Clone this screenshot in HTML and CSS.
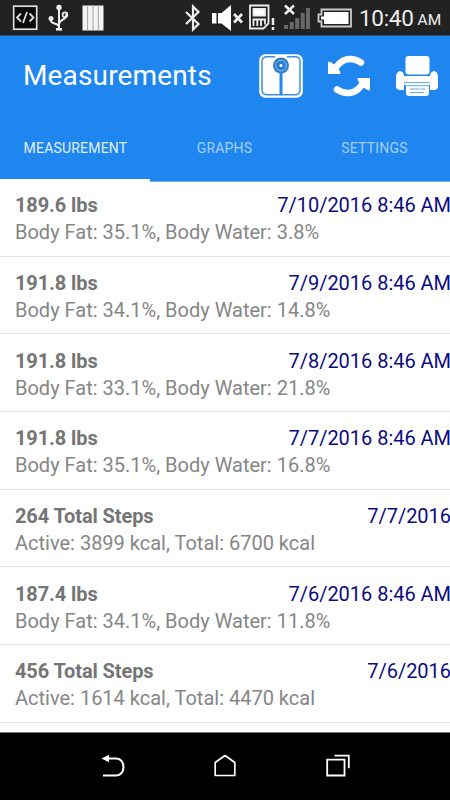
FILE: index.html
```
<!DOCTYPE html>
<html lang="en">
<head>
<meta charset="utf-8">
<title>Measurements</title>
<link rel="stylesheet" href="styles.css">
</head>
<body>
<div class="phone">
  <div class="status">
    <svg class="i-code" width="26" height="26" viewBox="0 0 26 26" fill="none" stroke="#ddd"><rect x="1.7" y="1.2" width="23" height="23" fill="#090909" stroke-width="1.7"/><path d="M9 8.500l-4 4 4 4M17.500 8.500l4 4-4 4M15 7l-4 11" stroke-width="1.800"/></svg>
    <svg class="i-usb" width="22" height="28" viewBox="0 0 22 28" fill="none" stroke="#eee" stroke-width="2"><path d="M11 3v21M3 15v2c0 3 8 2 8 6M18 10c2 6-7 5-7 10" /><circle cx="11" cy="3.4" r="2.7" fill="#eee" stroke="none"/><circle cx="3" cy="14.5" r="2.5" fill="#eee" stroke="none"/><circle cx="17" cy="10.7" r="2.4" stroke-width="1.7"/><path d="M8 25.3h6" stroke-width="2.6"/></svg>
    <svg class="i-bars" width="22" height="26" viewBox="0 0 22 26"><path fill="#f4f4f4" d="M.5.5h21v25H.5z"/><path d="M5.6 0v26M11 0v26M16.3 0v26" stroke="#a0a0a0" stroke-width="1"/></svg>
    <svg class="i-bt" width="16" height="28" viewBox="0 0 16 28" fill="none" stroke="#eee" stroke-width="2.200"><path d="M1 8l12.500 12L8 25.500v-23L13.500 8 1 20"/></svg>
    <svg class="i-mute" width="33" height="28" viewBox="0 0 33 28"><path fill="#fff" d="M0 9h4.500v10.500H0zM6 9h3.500L19 1v26l-9.500-7.500H6z"/><path d="M22 10l8 8.500M30 10l-8 8.500" stroke="#eee" stroke-width="2.700"/></svg>
    <svg class="i-sim" width="26" height="27" viewBox="0 0 26 27" fill="none" stroke="#eee" stroke-width="1.800"><path d="M1 1.500h18.500v18l-5 5H1z"/><path d="M4.500 5h11.500v6.500H4.500z" fill="#fff"/><path d="M4.500 22v-6.500h11.500v5M8.300 16v6M12 16v6"/><path d="M24 14v7M24 23v3" stroke-width="2.500"/></svg>
    <svg class="i-signal" width="28" height="28" viewBox="0 0 28 28"><path fill="#686868" d="M1 23h4v4H1zM6.700 20h4v7h-4zM12.200 16h4v11h-4zM17.700 11h4v16h-4zM23 6h4v21h-4z"/><path d="M2 3.500l9 8.500M11 3.500l-9 8.500" stroke="#eee" stroke-width="2.500"/></svg>
    <svg class="i-batt" width="36" height="20" viewBox="0 0 36 20"><path d="M1.500 6.500h3v-5h29.500v17H4.500v-5h-3z" fill="#222" stroke="#c7cdc4" stroke-width="1.800"/><path d="M4 8.500h3V4h24.500v12H7v-4.500H4z" fill="#fff"/></svg>
    <span class="clock">10:40</span><span class="ampm">AM</span>
  </div>
  <header>
    <div class="bar">
      <h1>Measurements</h1>
      <svg class="i-scale" width="44" height="44" viewBox="0 0 44 44"><rect x=".2" y=".2" width="43.600" height="43.600" rx="6" fill="#fff"/><path d="M16 2.800H8q-5 0-5 5v28q0 5 5 5h28q5 0 5-5v-28q0-5-5-5h-8" fill="none" stroke="#3e90e4" stroke-width="1.500"/><path d="M22 17v24" stroke="#1e88f0" stroke-width="3"/><circle cx="22" cy="11.500" r="8" fill="#2e7fd0"/><circle cx="22" cy="11.500" r="5.300" fill="none" stroke="#8abde9" stroke-width="1"/><circle cx="22" cy="11.500" r="1.500" fill="#fff"/></svg>
      <svg class="i-sync" width="42" height="42" viewBox="0 0 42 42"><path fill="none" stroke="#fff" stroke-width="6.500" stroke-linecap="round" d="M8 12.500C14 3 24 1.500 33 7.500M34 29.500C28 39 18 40.500 9 34.500"/><path fill="#fff" d="M0 6.500q5 1 7 4l5 5.500.5 3H0zM42 35.500q-5-1-7-4l-5-5.500-.5-3H42z"/></svg>
      <svg class="i-print" width="42" height="42" viewBox="0 0 42 42" fill="#fff"><rect x="9.500" y="1" width="24" height="18.500" rx="3"/><path d="M4 16q4 1 4 5h26q0-4 4-5 4 1 4 6v9q0 4-4 4h-4v-5H8v5H4q-4 0-4-4v-9q0-5 4-6z"/><path d="M10 29h23v9q0 3-3 3H13q-3 0-3-3z"/><path d="M8 27.500h26M9 30.700h24M14 34h9M24 34h5M14 37.500h14" stroke="#62aaf1" stroke-width="1" fill="none"/></svg>
    </div>
    <nav class="tabs">
      <div class="tab active"><span>MEASUREMENT</span></div>
      <div class="tab"><span>GRAPHS</span></div>
      <div class="tab"><span>SETTINGS</span></div>
    </nav>
  </header>
  <main>
    <div class="row"><div class="top"><b>189.6 lbs</b><time>7/10/2016 8:46 AM</time></div><p>Body Fat: 35.1%, Body Water: 3.8%</p></div>
    <div class="row"><div class="top"><b>191.8 lbs</b><time>7/9/2016 8:46 AM</time></div><p>Body Fat: 34.1%, Body Water: 14.8%</p></div>
    <div class="row"><div class="top"><b>191.8 lbs</b><time>7/8/2016 8:46 AM</time></div><p>Body Fat: 33.1%, Body Water: 21.8%</p></div>
    <div class="row"><div class="top"><b>191.8 lbs</b><time>7/7/2016 8:46 AM</time></div><p>Body Fat: 35.1%, Body Water: 16.8%</p></div>
    <div class="row"><div class="top"><b>264 Total Steps</b><time>7/7/2016</time></div><p>Active: 3899 kcal, Total: 6700 kcal</p></div>
    <div class="row"><div class="top"><b>187.4 lbs</b><time>7/6/2016 8:46 AM</time></div><p>Body Fat: 34.1%, Body Water: 11.8%</p></div>
    <div class="row"><div class="top"><b>456 Total Steps</b><time>7/6/2016</time></div><p>Active: 1614 kcal, Total: 4470 kcal</p></div>
  </main>
  <footer>
    <svg width="26" height="24" viewBox="0 0 26 24" fill="none" stroke="#fff" stroke-width="2"><path d="M7 4.500h8c10 0 10 17 0 17H2"/><path d="M.5 4.500L8 .8v7.400z" fill="#fff" stroke="none"/></svg>
    <svg width="24" height="24" viewBox="0 0 24 24" fill="none" stroke="#fff" stroke-width="1.700" stroke-linejoin="round"><path d="M2.200 8.500L12 1.500l9.800 7v13H2.200z"/></svg>
    <svg width="26" height="24" viewBox="0 0 26 24" fill="none" stroke="#fff" stroke-width="1.800"><path d="M2.200 5.700h17.300v15.800H2.200z"/><path d="M9.500 1.700h14.300v12.500"/></svg>
  </footer>
</div>
</body>
</html>
```
FILE: styles.css
```
* { box-sizing: border-box; margin: 0; padding: 0; }
body { width: 450px; height: 800px; overflow: hidden; font-family: Roboto, "Liberation Sans", sans-serif; background: #fff; }
svg { display: block; flex: none; }
.phone { height: 800px; display: flex; flex-direction: column; }
.status { height: 36px; flex: none; background: #222; border-bottom: 1px solid #244f7c; display: flex; align-items: flex-start; padding-left: 12px; color: #eee; white-space: nowrap; }
.i-code { margin-top: 5px; }
.i-usb { margin: 4px 0 0 10px; }
.i-bars { margin: 5px 0 0 12px; }
.i-bt { margin: 4px 0 0 81px; }
.i-mute { margin: 4px 0 0 11px; }
.i-sim { margin: 4px 0 0 4px; }
.i-signal { margin: 2px 0 0 8px; }
.i-batt { margin: 8px 0 0 6px; }
.clock { margin-left: 6px; font-size: 22.5px; line-height: 37px; letter-spacing: -.3px; }
.ampm { margin-left: 4px; font-size: 15.5px; line-height: 40px; }
header { height: 146px; flex: none; background: #1e86ee; color: #fff; display: flex; flex-direction: column; }
.bar { height: 79px; display: flex; align-items: center; padding-left: 23px; }
h1 { width: 236px; font-size: 28px; font-weight: 400; line-height: 32px; letter-spacing: .15px; }
.i-sync { margin-left: 25px; }
.i-print { margin-left: 26px; }
.tabs { flex: 1; display: flex; }
.tab { flex: 1; display: flex; justify-content: center; align-items: center; border-bottom: 1px solid #6bacf2; font-size: 14px; letter-spacing: .2px; color: #a5cff9; }
.tab.active { padding-top: 2px; border-bottom: 3px solid #fff; color: #e1f0fe; }
.tab span { margin-left: -1px; }
.tab.active span { margin-left: 1px; }
main { height: 550px; margin-top: -3px; flex: none; position: relative; z-index: -1; }
.row { height: 77.7px; border-bottom: 1px solid #e4e4e4; padding: 13.3px 0 0 15px; color: #868686; font-size: 20px; white-space: nowrap; }
.top { display: flex; justify-content: space-between; line-height: 27px; }
b { color: #757575; font-weight: 700; letter-spacing: -.1px; }
time { color: #0b0b80; margin-right: -1px; letter-spacing: -.03px; }
p { line-height: 27px; }
footer { height: 68px; margin-top: auto; background: #000; border-top: 1px solid #777; display: flex; justify-content: space-between; padding: 21px 99px 0 101px; }
footer svg:nth-child(2) { margin-right: 2px; }
```
